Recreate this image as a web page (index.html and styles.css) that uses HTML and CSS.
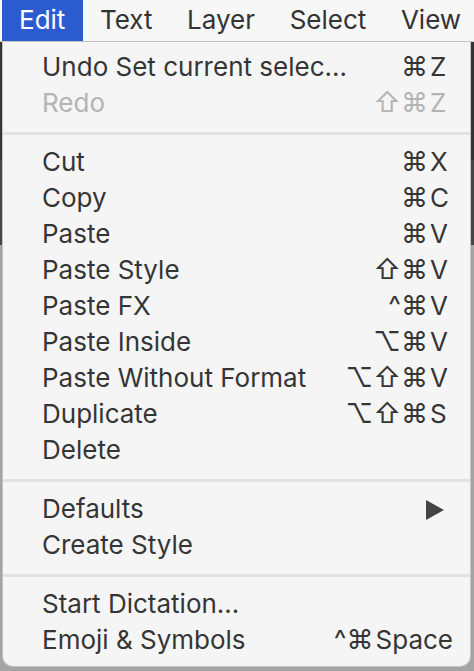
FILE: index.html
```html
<!DOCTYPE html>
<html lang="en">
<head>
<meta charset="utf-8">
<title>Edit menu</title>
<link rel="stylesheet" href="styles.css">
</head>
<body>
<div class="menubar">
  <span class="mb-item active">Edit</span>
  <span class="mb-item">Text</span>
  <span class="mb-item">Layer</span>
  <span class="mb-item">Select</span>
  <span class="mb-item">View</span>
</div>
<div class="menu">
  <div class="item"><span class="label">Undo Set current selec…</span><span class="keys"><span class="mods">⌘</span><span class="key">Z</span></span></div>
  <div class="item disabled"><span class="label">Redo</span><span class="keys"><span class="mods">⇧⌘</span><span class="key">Z</span></span></div>
  <div class="sep"></div>
  <div class="item"><span class="label">Cut</span><span class="keys"><span class="mods">⌘</span><span class="key">X</span></span></div>
  <div class="item"><span class="label">Copy</span><span class="keys"><span class="mods">⌘</span><span class="key">C</span></span></div>
  <div class="item"><span class="label">Paste</span><span class="keys"><span class="mods">⌘</span><span class="key">V</span></span></div>
  <div class="item"><span class="label">Paste Style</span><span class="keys"><span class="mods">⇧⌘</span><span class="key">V</span></span></div>
  <div class="item"><span class="label">Paste FX</span><span class="keys"><span class="mods">^⌘</span><span class="key">V</span></span></div>
  <div class="item"><span class="label">Paste Inside</span><span class="keys"><span class="mods">⌥⌘</span><span class="key">V</span></span></div>
  <div class="item"><span class="label">Paste Without Format</span><span class="keys"><span class="mods">⌥⇧⌘</span><span class="key">V</span></span></div>
  <div class="item"><span class="label">Duplicate</span><span class="keys"><span class="mods">⌥⇧⌘</span><span class="key">S</span></span></div>
  <div class="item"><span class="label">Delete</span></div>
  <div class="sep"></div>
  <div class="item"><span class="label">Defaults</span><span class="keys"><span class="key"><svg class="arrow" width="18" height="20" viewBox="0 0 18 20"><polygon points="0,0 18,10 0,20"/></svg></span></span></div>
  <div class="item"><span class="label">Create Style</span></div>
  <div class="sep"></div>
  <div class="item"><span class="label">Start Dictation…</span></div>
  <div class="item"><span class="label">Emoji &amp; Symbols</span><span class="keys wide"><span class="mods">^⌘</span><span class="key">Space</span></span></div>
</div>
</body>
</html>
```

FILE: styles.css
```css
html, body {
  margin: 0;
  padding: 0;
}
body {
  width: 474px;
  height: 671px;
  overflow: hidden;
  background: linear-gradient(to bottom, #343434 0, #343434 160px, #454545 160px, #454545 245px, #a4a4a4 245px, #a4a4a4 100%);
  font-family: "Inter", "DejaVu Sans", sans-serif;
  font-size: 26px;
  color: #353535;
}
.menubar {
  display: flex;
  height: 41px;
  box-sizing: border-box;
  padding: 0 0 2px 1px;
  background: #f7f7f7;
  border-bottom: 1px solid #cfcfcf;
  height: 42px;
}
.mb-item {
  display: flex;
  align-items: center;
  padding: 0 17.3px;
  color: #333;
}
.mb-item.active {
  background: #2c5bd0;
  color: #fff;
  margin: 0 0 -2px 1px;
  padding: 0 17.3px 2px 17px;
}
.menu {
  margin: 0 4px 0 3px;
  height: 624px;
  box-sizing: border-box;
  padding: 8px 0;
  background: #f5f5f5;
  border-radius: 0 0 10px 10px;
  box-shadow: 0 0 0 1px #c4c4c4;
}
.item {
  display: flex;
  align-items: center;
  height: 36px;
  box-sizing: border-box;
  padding: 0 18px 4px 39px;
}
.item.disabled {
  color: #b4b4b4;
}
.keys {
  margin-left: auto;
  display: flex;
  align-items: center;
}
.keys.wide {
  margin-right: -1px;
}
.mods {
  text-align: right;
  padding-right: 2px;
  font-size: 27px;
}
.key {
  min-width: 22px;
  display: flex;
  align-items: center;
}
.arrow {
  fill: #444;
  margin: 4px 0 0 -4px;
}
.sep {
  height: 3px;
  margin: 10px 0;
  background: #e2e2e2;
}
```
